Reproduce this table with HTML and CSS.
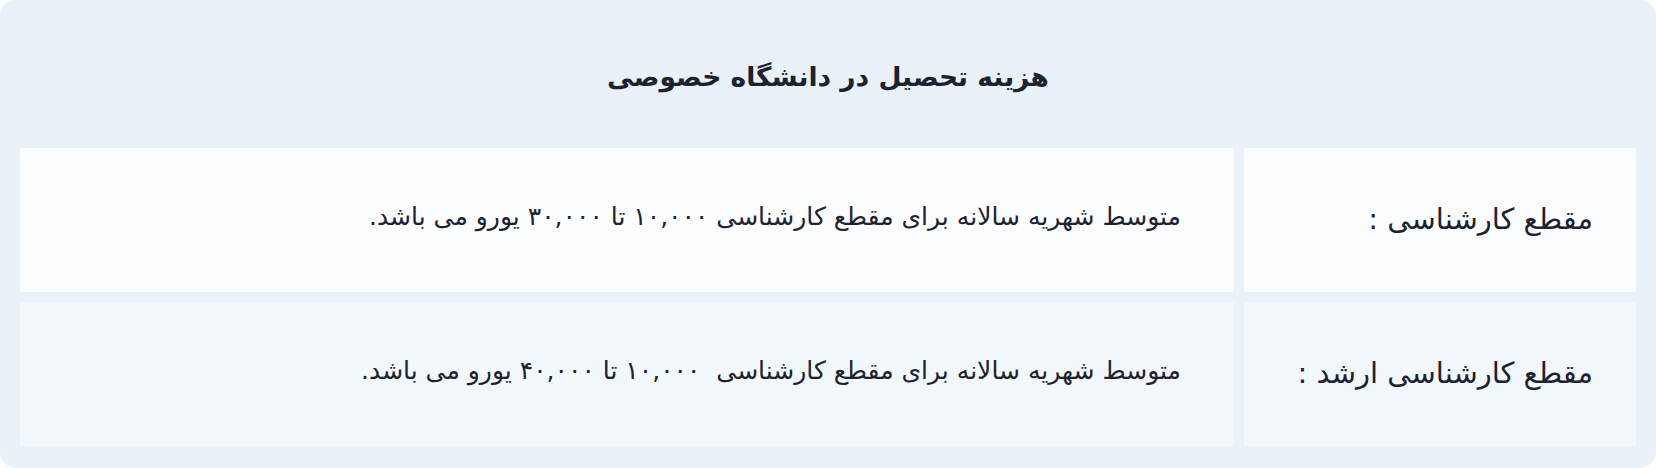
FILE: index.html
```html
<!DOCTYPE html>
<html lang="fa" dir="rtl">
<head>
<meta charset="utf-8">
<title>هزینه تحصیل</title>
<link rel="stylesheet" href="styles.css">
</head>
<body>
<section class="card">
  <h2 class="title">هزینه تحصیل در دانشگاه خصوصی</h2>
  <div class="grid">
    <div class="cell label row-a">مقطع کارشناسی :</div>
    <div class="cell desc row-a">متوسط شهریه سالانه برای مقطع کارشناسی ۱۰,۰۰۰ تا ۳۰,۰۰۰ یورو می باشد.</div>
    <div class="cell label row-b">مقطع کارشناسی ارشد :</div>
    <div class="cell desc row-b">متوسط شهریه سالانه برای مقطع کارشناسی&nbsp; ۱۰,۰۰۰ تا ۴۰,۰۰۰ یورو می باشد.</div>
  </div>
</section>
</body>
</html>
```
FILE: styles.css
```css
html, body {
  margin: 0;
  padding: 0;
  background: #ffffff;
}
body {
  font-family: "DejaVu Sans", sans-serif;
  color: #1c2230;
}
.card {
  box-sizing: border-box;
  width: 1656px;
  height: 468px;
  background: #eaf2f9;
  border-radius: 16px;
  padding: 0 20px 22px;
  display: flex;
  flex-direction: column;
}
.title {
  margin: 0;
  height: 148px;
  display: flex;
  align-items: center;
  justify-content: center;
  font-size: 26.5px;
  font-weight: bold;
  padding-top: 4px;
  box-sizing: border-box;
}
.grid {
  display: grid;
  grid-template-columns: 392px 1fr;
  grid-auto-rows: 144px;
  gap: 10px;
}
.cell {
  display: flex;
  align-items: center;
}
.row-a { background: #fcfdff; }
.row-b { background: #f3f8fc; }
.label {
  font-size: 29px;
  padding-right: 43px;
  padding-bottom: 2px;
}
.desc {
  font-size: 25px;
  padding-right: 53px;
  padding-bottom: 8px;
}
```
